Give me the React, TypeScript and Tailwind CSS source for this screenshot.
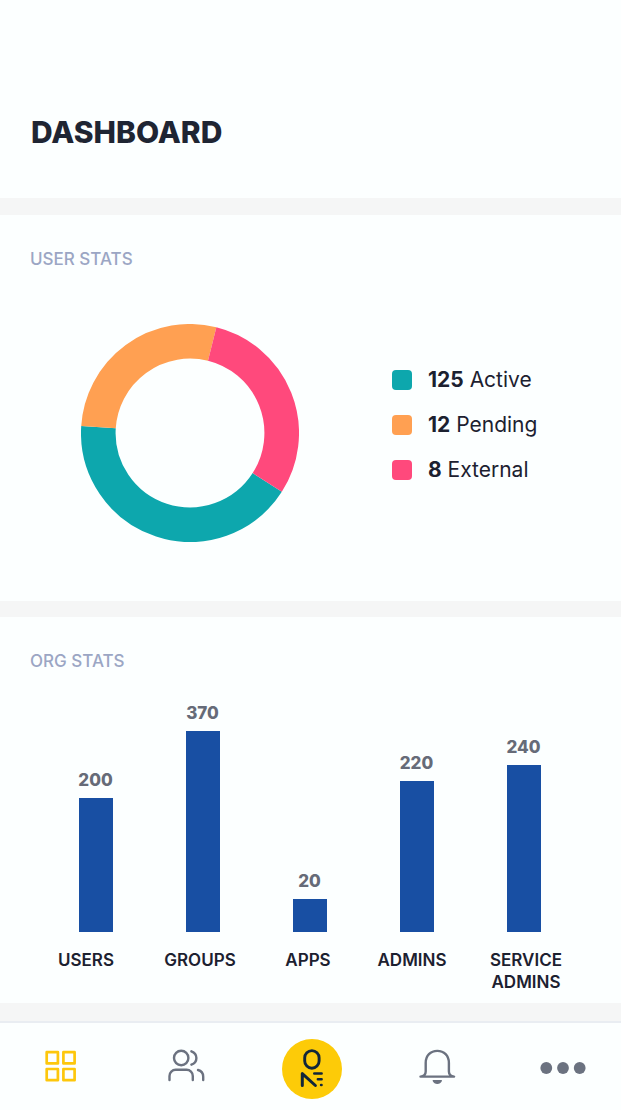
import React from "react";

const legend = [
  { count: 125, label: "Active", swatch: "bg-[#0da7ad]" },
  { count: 12, label: "Pending", swatch: "bg-[#ffa052]" },
  { count: 8, label: "External", swatch: "bg-[#ff497c]" },
];

const bars = [
  { value: 200, height: 134 },
  { value: 370, height: 201 },
  { value: 20, height: 33 },
  { value: 220, height: 151 },
  { value: 240, height: 167 },
];

const barLabels = ["USERS", "GROUPS", "APPS", "ADMINS", "SERVICE ADMINS"];

function arc(from: number, to: number): string {
  const r = 91.7;
  const point = (deg: number) => {
    const a = (deg * Math.PI) / 180;
    return `${109 + r * Math.sin(a)} ${109 - r * Math.cos(a)}`;
  };
  return `M${point(from)}A${r} ${r} 0 ${to - from > 180 ? 1 : 0} 1 ${point(to)}`;
}

function Donut() {
  return (
    <svg viewBox="0 0 218 218" className="size-[218px] shrink-0" fill="none" strokeWidth="34.6" role="img" aria-label="User stats">
      <path d={arc(122.6, 273.7)} stroke="#0da7ad" />
      <path d={arc(273.7, 374)} stroke="#ffa052" />
      <path d={arc(14, 122.6)} stroke="#ff497c" />
    </svg>
  );
}

function GridIcon() {
  return (
    <svg viewBox="0 0 60 60" className="size-[60px]" fill="none" stroke="#fdc70c" strokeWidth="2.7" strokeLinejoin="round">
      <rect x="16.7" y="13.2" width="11.2" height="11.2" />
      <rect x="33.4" y="13.2" width="11.2" height="11.2" />
      <rect x="16.7" y="30" width="11.2" height="11.2" />
      <rect x="33.4" y="30" width="11.2" height="11.2" />
    </svg>
  );
}

function UsersIcon() {
  return (
    <svg viewBox="0 0 60 60" className="size-[60px]" fill="none" stroke="#6b7280" strokeWidth="2.4" strokeLinecap="round">
      <circle cx="25.2" cy="19" r="7.2" />
      <path d="M35.400 12.300c3.300 1.200 5 3.800 5 6.700s-1.700 5.500-5 6.700" />
      <path d="M13.500 41V37a6.200 6.200 0 0 1 6.200-6.200h10.900a6.200 6.200 0 0 1 6.200 6.200v4" />
      <path d="M42 31c3.300.8 5.200 3.300 5.200 6.800V41" />
    </svg>
  );
}

function OneLogo() {
  return (
    <svg viewBox="0 0 60 60" className="size-[60px]" fill="none" stroke="#12263a" strokeWidth="2.600" strokeLinecap="round" strokeLinejoin="round">
      <circle cx="30" cy="30" r="30" fill="#fdcb08" stroke="none" />
      <rect x="22.700" y="11.600" width="14.400" height="17.600" rx="7.200" strokeWidth="2.900" />
      <path d="M20.300 46.600V34.600L33.400 46.500" strokeWidth="3" />
      <path d="M32.300 34.500h7.300M35.900 40.200h3.700M39.100 46h.4" />
    </svg>
  );
}

function BellIcon() {
  return (
    <svg viewBox="0 0 60 60" className="size-[60px]" fill="none" stroke="#6b7280" strokeWidth="2.400" strokeLinecap="round" strokeLinejoin="round">
      <path d="M13.500 37.600c3.700-.4 5.200-1.800 5.200-5v-8.700c0-7.200 4.800-12 11.600-12s11.600 4.800 11.600 12v8.700c0 3.200 1.500 4.600 5.200 5z" />
      <path d="M26.300 41.600h8c-.8 1.700-2.200 2.600-4 2.600s-3.200-.9-4-2.600z" fill="#6b7280" strokeWidth="1.400" />
    </svg>
  );
}

function MoreIcon() {
  return (
    <svg viewBox="0 0 60 60" className="size-[60px]" fill="#6b7280">
      <circle cx="13.300" cy="29" r="5.900" />
      <circle cx="30" cy="29" r="5.900" />
      <circle cx="46.700" cy="29" r="5.900" />
    </svg>
  );
}

const navItems = [
  { name: "Dashboard", Icon: GridIcon },
  { name: "Users", Icon: UsersIcon },
  { name: "One", Icon: OneLogo },
  { name: "Notifications", Icon: BellIcon },
  { name: "More", Icon: MoreIcon },
];

export default function App() {
  return (
    <div className="flex min-h-screen flex-col bg-[#f5f6f6] font-['Inter','Liberation_Sans',sans-serif] text-[#1c2130]">
      <header className="bg-[#fcffff] px-[31px] pt-28 pb-[46px]">
        <h1 className="text-[30px] leading-10 font-extrabold text-[#1f2533]">DASHBOARD</h1>
      </header>

      <main className="mt-[17px] flex flex-col gap-4">
        <section className="bg-[#fcffff] pt-8 pb-[59px]">
          <h2 className="px-[30px] text-[17px] leading-6 font-medium text-[#9ba6c4]">USER STATS</h2>
          <div className="mt-[53px] flex items-center gap-[93px] pl-[81px]">
            <Donut />
            <ul className="flex flex-col gap-[15px] pb-[17px]">
              {legend.map((item) => (
                <li key={item.label} className="flex items-center gap-4 text-[21px] leading-[30px]">
                  <span className={`size-5 rounded ${item.swatch}`} />
                  <span>
                    <b className="font-bold">{item.count}</b> {item.label}
                  </span>
                </li>
              ))}
            </ul>
          </div>
        </section>

        <section className="bg-[#fcffff] pt-8 pb-[10px]">
          <h2 className="px-[30px] text-[17px] leading-6 font-medium text-[#9ba6c4]">ORG STATS</h2>
          <div className="mt-7 grid grid-cols-5 items-end pr-11 pl-[42px]">
            {bars.map((bar) => (
              <div key={bar.value} className="flex flex-col items-center gap-[6px]">
                <span className="text-[17px] leading-6 font-extrabold text-[#666b78]">{bar.value}</span>
                <div className="w-[34px] bg-[#184fa3]" style={{ height: bar.height }} />
              </div>
            ))}
          </div>
          <div className="mt-[17px] grid grid-cols-[112fr_116fr_100fr_108fr_120fr] pr-[35px] pl-[30px] text-center text-[17px] leading-[22px] font-semibold">
            {barLabels.map((label) => (
              <span key={label} className="px-4">{label}</span>
            ))}
          </div>
        </section>
      </main>

      <nav className="mt-[18px] flex grow items-start justify-between border-t-2 border-[#e9edf2] bg-[#fcffff] pt-4 pr-7 pb-2 pl-[30px]">
        {navItems.map(({ name, Icon }) => (
          <button key={name} type="button" aria-label={name} className="rounded-full">
            <Icon />
          </button>
        ))}
      </nav>
    </div>
  );
}
